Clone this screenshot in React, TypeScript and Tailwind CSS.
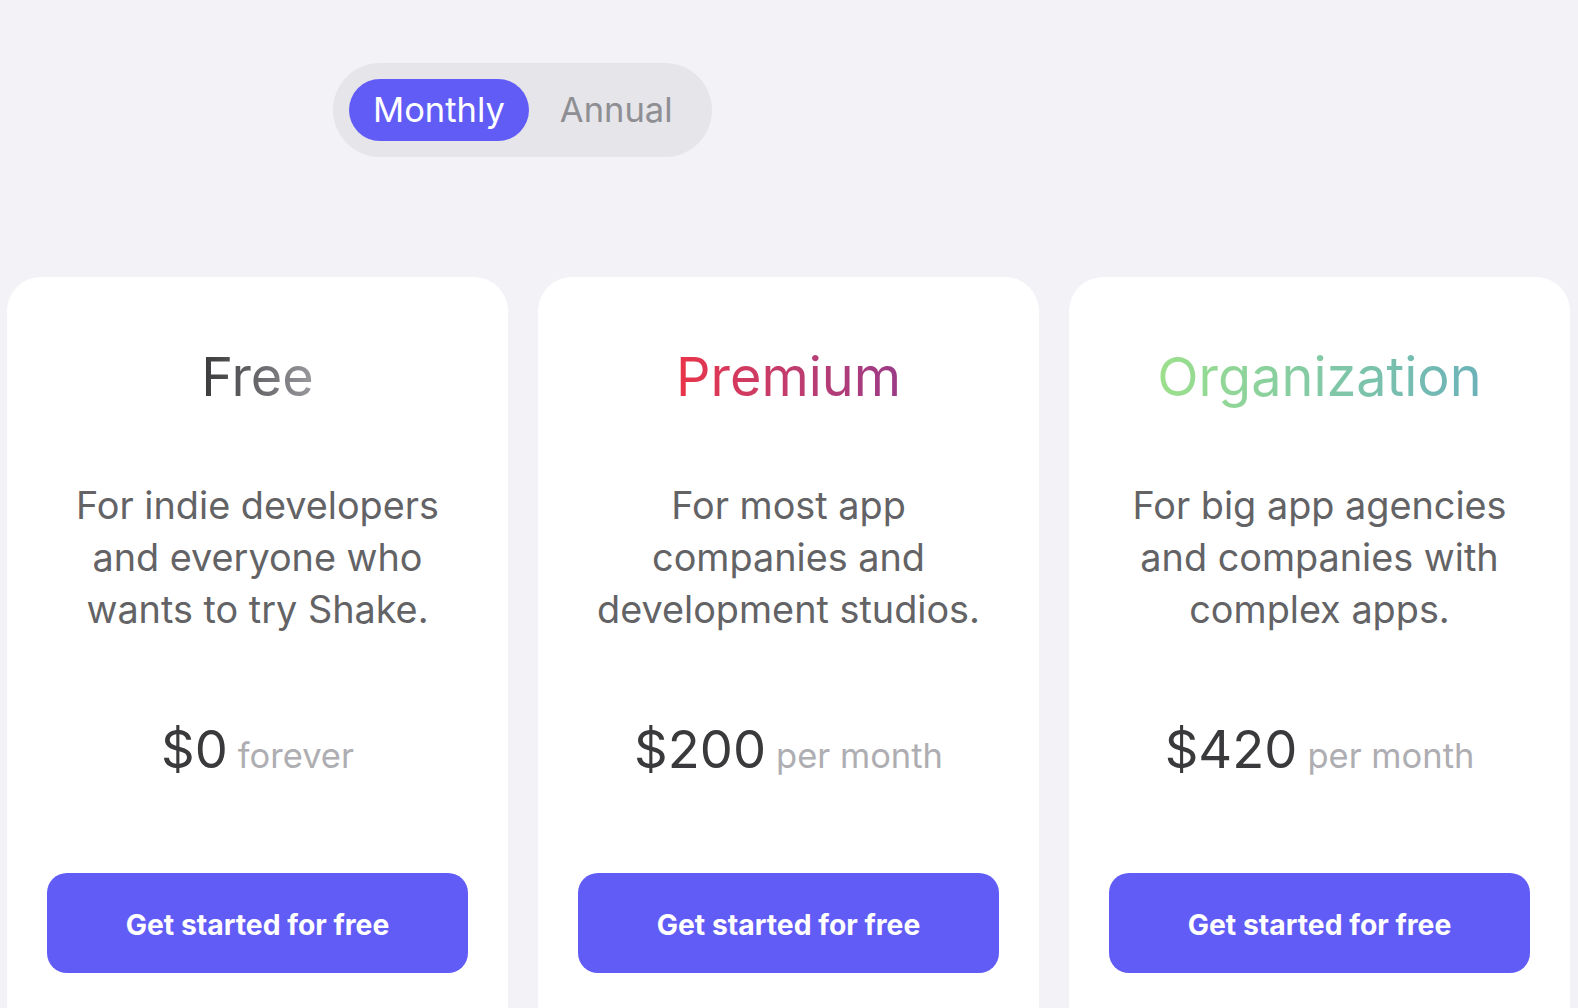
import React from "react";

const plans = [
  {
    name: "Free",
    grad: "bg-linear-to-r from-[#3a3a3c] to-[#9a9a9f]",
    desc: ["For indie developers", "and everyone who", "wants to try Shake."],
    price: "$0",
    unit: "forever",
  },
  {
    name: "Premium",
    grad: "bg-linear-to-r from-[#ea3347] to-[#9b3a88]",
    desc: ["For most app", "companies and", "development studios."],
    price: "$200",
    unit: "per month",
  },
  {
    name: "Organization",
    grad: "bg-linear-to-r from-[#9ce08b] to-[#6bb2b9]",
    desc: ["For big app agencies", "and companies with", "complex apps."],
    price: "$420",
    unit: "per month",
  },
];

export default function App() {
  return (
    <div
      className="min-h-screen w-full overflow-hidden bg-[#f2f2f7] pt-[63px]"
      style={{ fontFamily: "Inter, 'Noto Sans', sans-serif", height: 1008 }}
    >
      <div className="ml-[333px] inline-flex items-center gap-[7px] rounded-full bg-[#e5e5ea] p-[16px] pr-[15px]">
        <button className="h-[62px] rounded-full bg-[#625cf6] px-[24px] text-[34.5px] leading-none text-white">
          Monthly
        </button>
        <button className="h-[62px] rounded-full px-[24px] text-[34.5px] leading-none text-[#8e8e93]">
          Annual
        </button>
      </div>

      <div className="mt-[120px] grid grid-cols-3 gap-[30px] pl-[7px] pr-[8px]">
        {plans.map((p) => (
          <div key={p.name} className="rounded-[34px] bg-white px-[40px] pb-[80px] pt-[68px] text-center">
            <div className="h-[64px] text-[54px] leading-[64px]">
              <span className={`inline-block bg-clip-text text-transparent ${p.grad}`}>{p.name}</span>
            </div>
            <div className="mt-[70px] text-[37.8px] leading-[52px] text-[#636366]">
              {p.desc.map((l) => (
                <div key={l} className="whitespace-nowrap">
                  {l}
                </div>
              ))}
            </div>
            <div className="mt-[82px] flex h-[64px] items-baseline justify-center gap-[10px] leading-[64px]">
              <span className="text-[52.5px] text-[#3a3a3c]">{p.price}</span>
              <span className="text-[34.5px] text-[#aeaeb2]">{p.unit}</span>
            </div>
            <button className="mt-[92px] flex h-[100px] w-full items-center justify-center rounded-[20px] bg-[#625cf6] pt-[4px] text-[28.3px] font-bold text-white">
              Get started for free
            </button>
          </div>
        ))}
      </div>
    </div>
  );
}
